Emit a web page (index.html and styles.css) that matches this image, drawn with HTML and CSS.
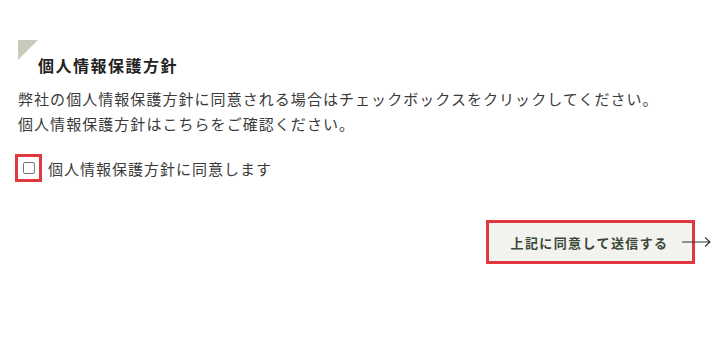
FILE: index.html
```html
<!DOCTYPE html>
<html lang="ja">
<head>
<meta charset="utf-8">
<link rel="stylesheet" href="styles.css">
</head>
<body>
<section class="policy">
  <h2 class="policy-title">個人情報保護方針</h2>
  <p class="policy-text">弊社の個人情報保護方針に同意される場合はチェックボックスをクリックしてください。<br>個人情報保護方針はこちらをご確認ください。</p>
  <label class="agree">
    <span class="agree-mark"><input type="checkbox" class="agree-box"></span>
    <span class="agree-label">個人情報保護方針に同意します</span>
  </label>
  <div class="actions">
    <button type="button" class="submit">上記に同意して送信する<span class="submit-arrow"><svg width="30" height="12" viewBox="0 0 30 12"><path d="M0 6H28M23 1.5L28 6L23 10.5" fill="none" stroke="#333" stroke-width="1.1"/></svg></span></button>
  </div>
</section>
</body>
</html>
```
FILE: styles.css
```css
html, body {
  margin: 0;
  padding: 0;
  background: #fff;
}
body {
  font-family: "Noto Sans CJK JP", "Noto Sans", sans-serif;
  color: #3a3a3a;
}
.policy {
  padding: 40px 25px 0 18px;
}
.policy-title {
  position: relative;
  margin: 0;
  padding: 13px 0 0 20px;
  font-size: 16px;
  line-height: 24px;
  font-weight: 700;
  letter-spacing: 1.5px;
  color: #222;
}
.policy-title::before {
  content: "";
  position: absolute;
  left: 0;
  top: 0;
  width: 0;
  height: 0;
  border-top: 20px solid #c6cbbc;
  border-right: 20px solid transparent;
}
.policy-text {
  margin: 10px 0 0;
  font-size: 15px;
  line-height: 24.5px;
  letter-spacing: 1.05px;
}
.agree {
  display: flex;
  align-items: center;
  margin-top: 18px;
  margin-left: -3px;
  gap: 6px;
}
.agree-mark {
  display: flex;
  align-items: center;
  justify-content: center;
  width: 21px;
  height: 22px;
  border: 3px solid #e0383e;
}
.agree-box {
  appearance: none;
  -webkit-appearance: none;
  margin: 0;
  width: 12px;
  height: 12px;
  border: 1px solid #777;
  border-radius: 2px;
  background: #fff;
}
.agree-label {
  font-size: 15px;
  line-height: 24px;
  letter-spacing: 1px;
  padding-top: 2px;
}
.actions {
  display: flex;
  justify-content: flex-end;
  margin-top: 38px;
}
.submit {
  position: relative;
  width: 209px;
  height: 44px;
  padding: 0 2px 0 0;
  border: 3px solid #e0383e;
  background: #f2f3ef;
  font-family: "Noto Sans CJK JP", "Noto Sans", sans-serif;
  font-size: 13px;
  font-weight: 700;
  letter-spacing: 1.4px;
  color: #3b4736;
  cursor: pointer;
}
.submit-arrow {
  position: absolute;
  left: 193px;
  top: 13px;
  display: block;
  line-height: 0;
}
```
